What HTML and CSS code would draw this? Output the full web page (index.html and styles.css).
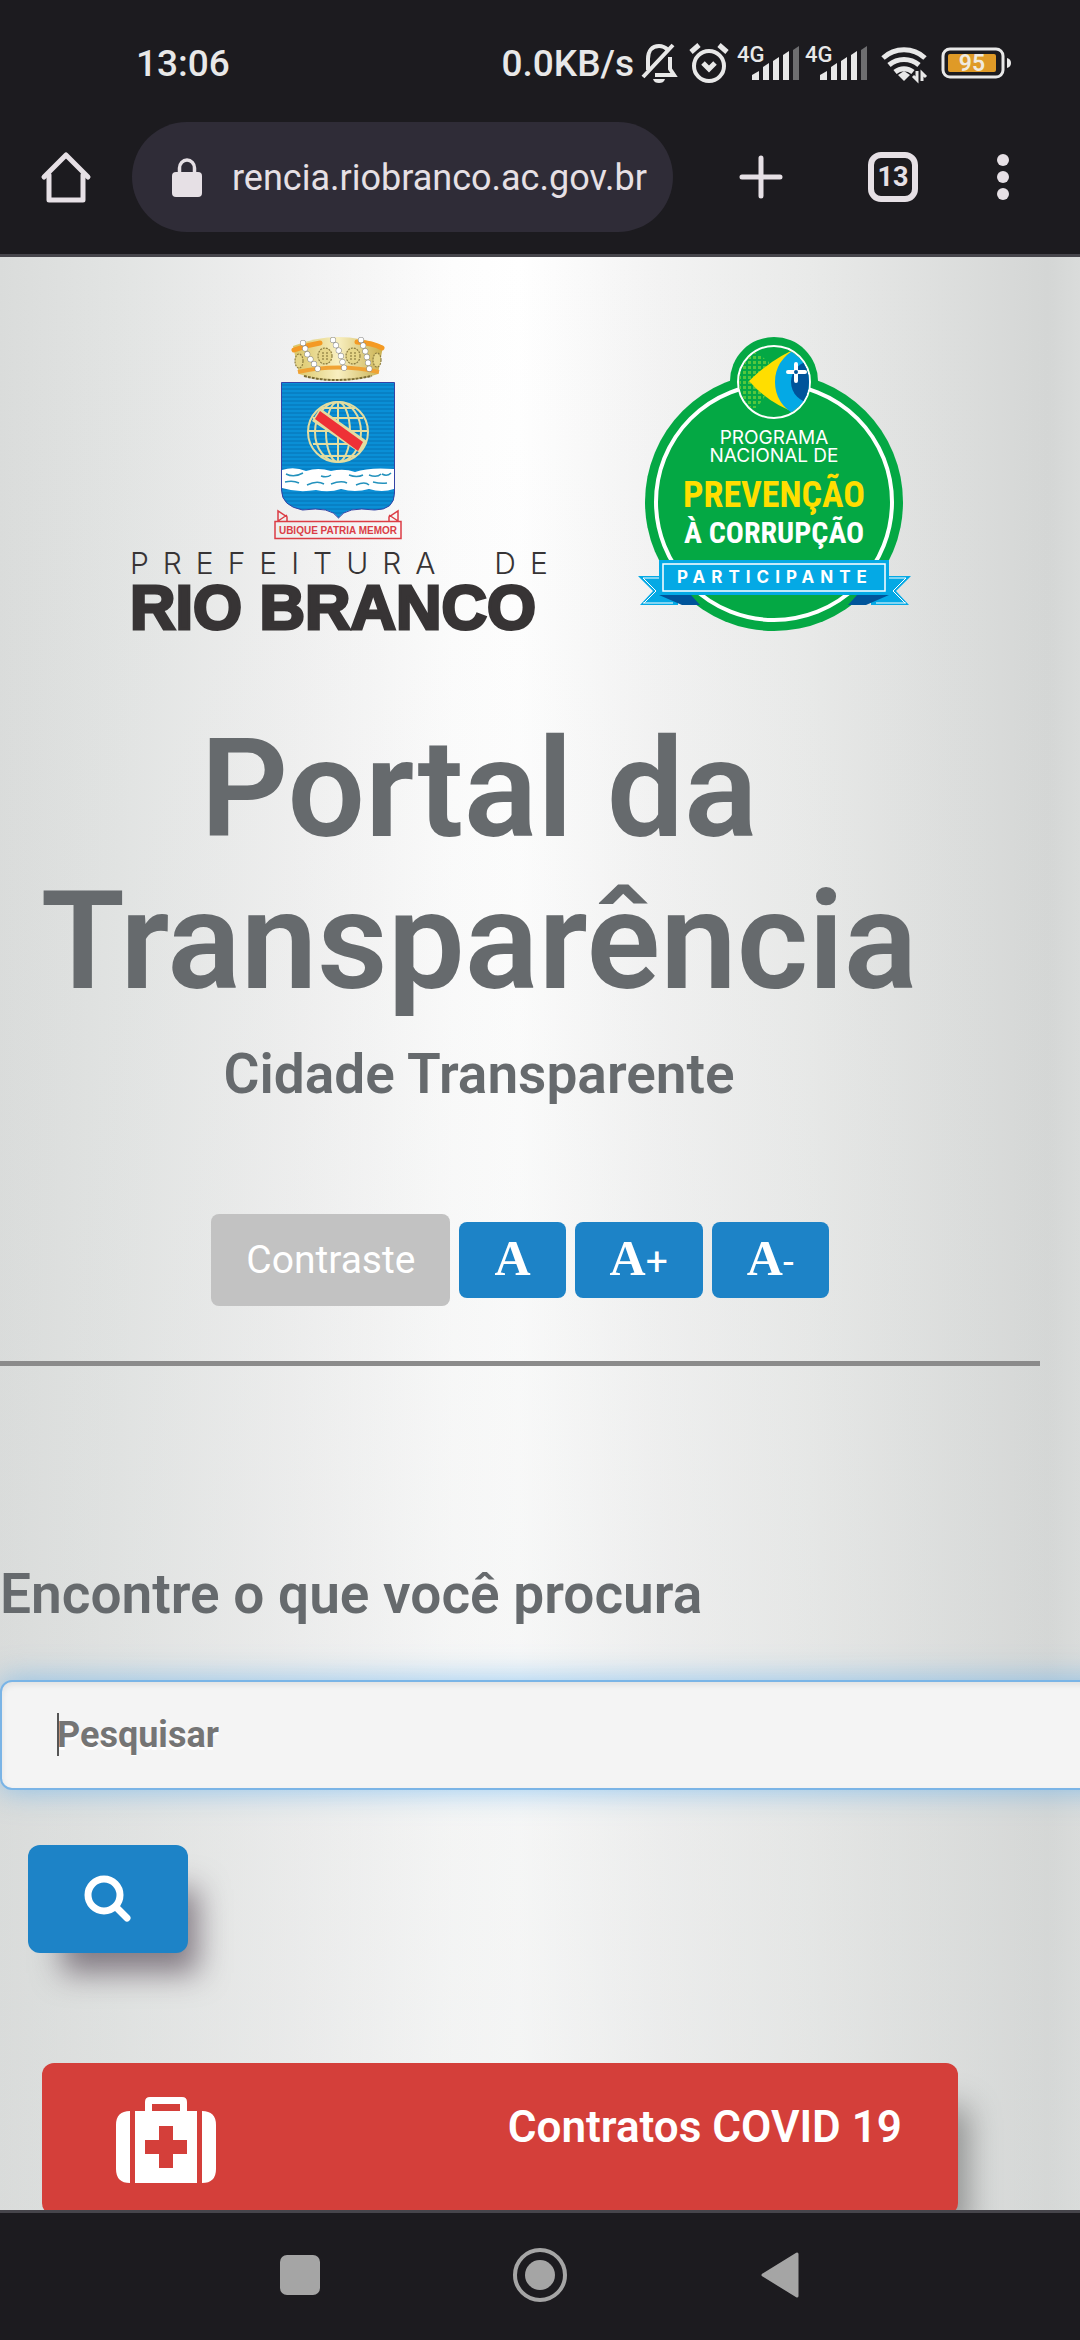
FILE: index.html
```html
<!DOCTYPE html>
<html lang="pt-BR">
<head>
<meta charset="utf-8">
<meta name="viewport" content="width=device-width, initial-scale=1">
<title>Portal da Transparência</title>
<link rel="stylesheet" href="styles.css">
</head>
<body>
<header class="chrome">
  <div class="status">
    <span class="clock">13:06</span>
    <div class="status-right">
      <span class="rate">0.0KB/s</span>
      <svg class="bell" width="36" height="42" viewBox="0 0 36 42" fill="none" stroke="#e8e8e8" stroke-width="4">
        <path d="M7 28V17C7 9 11 4 18 4c4 0 7 2 9 4M29 15v12l4 6H14M2 35L32 3"/>
        <path d="M12 37h12c-1 3-3 4-6 4s-5-1-6-4z" fill="#e8e8e8" stroke="none"/>
      </svg>
      <svg class="alarm" width="40" height="42" viewBox="0 0 40 42" fill="none" stroke="#e8e8e8" stroke-width="4">
        <circle cx="20" cy="24" r="15"/><path d="M14 21l6 6 6-6M2 10l8-7M30 3l8 7" stroke-width="5"/>
      </svg>
      <svg class="signal" width="64" height="44" viewBox="0 -4 64 44" fill="#e8e8e8">
        <text x="0" y="17" font-size="22" font-family="Roboto, sans-serif">4G</text>
        <path d="M15 35v-5l7-4v9zM26 35V22l6-4v17zM36 35V16l6-4v23zM46 35V10l6-4v29z"/><path d="M56 35V5l6-4v34z" fill="#6e6e70"/>
      </svg>
      <svg class="signal" width="64" height="44" viewBox="0 -4 64 44" fill="#e8e8e8">
        <text x="0" y="17" font-size="22" font-family="Roboto, sans-serif">4G</text>
        <path d="M15 35v-5l7-4v9zM26 35V22l6-4v17zM36 35V16l6-4v23zM46 35V10l6-4v29z"/><path d="M56 35V5l6-4v34z" fill="#6e6e70"/>
      </svg>
      <svg class="wifi" width="46" height="38" viewBox="0 0 46 38" fill="none" stroke="#e8e8e8" stroke-width="5">
        <path d="M2 14a31 31 0 0 1 42 0M8 21a23 23 0 0 1 30 0M14 28a14 14 0 0 1 18 0"/>
        <path d="M23 27l6 4-6 6-6-6z" fill="#e8e8e8" stroke="none"/>
        <path d="M36 27v9l-4-4M41 37v-8l4 4" stroke-width="3"/>
      </svg>
      <svg class="battery" width="70" height="32" viewBox="0 0 70 32">
        <rect x="2" y="2" width="60" height="28" rx="7" fill="none" stroke="#e8e8e8" stroke-width="3"/>
        <rect x="7" y="7" width="48" height="18" rx="2" fill="#df9a27"/>
        <path d="M66 11q4 1 4 5t-4 5z" fill="#e8e8e8"/>
        <text x="31" y="24" text-anchor="middle" font-size="23" font-weight="600" font-family="Roboto, sans-serif" fill="#f0eadf">95</text>
      </svg>
    </div>
  </div>
  <div class="toolbar">
    <button class="tool" aria-label="Página inicial">
      <svg width="52" height="52" viewBox="0 0 52 52" fill="none" stroke="#e6e0e5" stroke-width="5" stroke-linejoin="round" stroke-linecap="round"><path d="M4 26L26 4l22 22"/><path d="M9 24v25h34V24"/></svg>
    </button>
    <div class="address">
      <svg width="30" height="40" viewBox="0 0 30 40"><rect y="14" width="30" height="25" rx="4" fill="#e6e0e5"/><path d="M7.500 16v-6a7.500 8 0 0 1 15 0v6" fill="none" stroke="#e6e0e5" stroke-width="3.500"/></svg>
      <span class="url">rencia.riobranco.ac.gov.br</span>
    </div>
    <button class="tool plus" aria-label="Nova guia">
      <svg width="44" height="44" viewBox="0 0 44 44" stroke="#e6e0e5" stroke-width="5" stroke-linecap="round"><path d="M22 3v38M3 22h38"/></svg>
    </button>
    <button class="tool tabs" aria-label="Guias abertas">13</button>
    <button class="tool more" aria-label="Mais opções">
      <svg width="12" height="46" viewBox="0 0 12 46" fill="#e6e0e5"><circle cx="6" cy="6" r="6"/><circle cx="6" cy="23" r="6"/><circle cx="6" cy="40" r="6"/></svg>
    </button>
  </div>
</header>

<main class="page">
  <section class="hero">
    <div class="logos">
      <svg class="city" width="416" height="296" viewBox="129 337 416 296" role="img" aria-label="Prefeitura de Rio Branco">
        <defs>
          <linearGradient id="gold" x1="0" x2="1"><stop offset="0" stop-color="#d9c463"/><stop offset=".5" stop-color="#f8efc0"/><stop offset="1" stop-color="#c9b04e"/></linearGradient>
          <pattern id="lines" width="6" height="4" patternUnits="userSpaceOnUse"><rect width="6" height="4" fill="#0a8fd6"/><path d="M0 1h6" stroke="#0672b4" stroke-width="1"/></pattern>
        </defs>
        <path d="M292 346q46-18 90 0l-5 28q-40 14-79 0z" fill="url(#gold)"/>
        <path d="M293 350q13-5 26-7M356 342q16 1 25 6" stroke="#f49a24" stroke-width="5" fill="none" stroke-linecap="round"/>
        <path d="M297 372q40-9 81 0" stroke="#f0a234" stroke-width="4" fill="none"/>
        <path d="M303 376q30 8 68 0" stroke="#7a6b32" stroke-width="2" stroke-dasharray="3 1" fill="none"/>
        <g fill="#e6d688" stroke="#8d7d40" stroke-width="1.200" stroke-dasharray="2 1"><ellipse cx="298" cy="361" rx="4" ry="7"/><ellipse cx="324" cy="356" rx="7" ry="8"/><ellipse cx="352" cy="356" rx="7" ry="8"/><ellipse cx="376" cy="360" rx="4" ry="7"/><path d="M322 352v8m4-8v8m24-8v8m4-8v8"/></g>
        <g fill="none" stroke-linecap="round"><path d="M302 343l5 13 12 16M332 340l7 13 5 18M360 340l5 13 4 19" stroke="#888" stroke-width="6" stroke-dasharray="0 6"/><path d="M302 343l5 13 12 16M332 340l7 13 5 18M360 340l5 13 4 19" stroke="#fff" stroke-width="5" stroke-dasharray="0 6"/></g>
        <path d="M280.500 382.500h113V493q0 17-20 17-28-4-36 8-8-12-36-8-21-4-21-20z" fill="url(#lines)" stroke="#3443a5"/>
        <g fill="none" stroke="#e4dda0" stroke-width="2"><circle cx="337" cy="432" r="30"/><ellipse cx="337" cy="432" rx="12" ry="30"/><ellipse cx="337" cy="432" rx="23" ry="30"/><path d="M337 402v60M307 431h60M312 418h50M312 444h50M320 408h34M320 456h34"/></g>
        <path d="M319 408l47 33-7 12-48-32z" fill="#e4dda0"/><path d="M319 411l43 31-5 9-43-32z" fill="#ee3136"/>
        <path d="M281 470q12-4 24 1 12-4 25 0 13-3 24 1 14-5 39-3v20q-12 4-25 0-14 4-28 0-12 4-25 1-18 3-34-2z" fill="#fff"/>
        <path d="M285 474q8 4 17-1M284 482q8-2 14 1M306 485q10-5 17-1M320 476q6 2 10-1M330 484q10-4 16-1M348 475q8 3 14 0M355 485q9-4 13 0M368 475q8 3 12-1M372 482q8 2 14 1M381 474q5 3 9-1" stroke="#2492bd" stroke-width="1.500" fill="none"/>
        <g fill="none" stroke="#db3d45" stroke-width="1.500"><path d="M274 521.500h126v17H274zM277 521v-10l9 6v4M277 521l9-6M397 521v-10l-9 6v4M397 521l-9-6"/></g>
        <text x="337" y="534" text-anchor="middle" font-family="Liberation Sans, sans-serif" font-size="10" font-weight="700" fill="#db3d45">UBIQUE PATRIA MEMOR</text>
        <text class="tracked-city" x="129" y="574" font-family="Inter, sans-serif" font-size="30" font-weight="300" fill="#373435">PREFEITURA &#160;DE</text>
        <text x="129" y="629" font-family="Liberation Sans, sans-serif" font-size="63" font-weight="700" fill="#373435" stroke="#373435" stroke-width="3">RIO BRANCO</text>
      </svg>
      <svg class="badge" width="274" height="296" viewBox="635 337 274 296" role="img" aria-label="Programa Nacional de Prevenção à Corrupção - Participante">
        <defs>
          <clipPath id="globe"><circle cx="772" cy="382" r="35"/></clipPath>
          <pattern id="dots" width="5" height="5" patternUnits="userSpaceOnUse"><rect x="1" y="1" width="3" height="3" fill="#55c63d"/></pattern>
        </defs>
        <circle cx="772" cy="381" r="44" fill="#04a844"/><circle cx="772" cy="502" r="129" fill="#04a844"/>
        <circle cx="772" cy="502" r="118" fill="none" stroke="#fff" stroke-width="4"/>
        <circle cx="772" cy="382" r="36" fill="#04a844" stroke="#fff" stroke-width="2"/>
        <g clip-path="url(#globe)">
          <path d="M736 362l15-12 16 12v28l-12 18h-9l-10-22z" fill="url(#dots)"/>
          <path d="M747 381q26-25 50-33v66q-30-10-50-33z" fill="#ffde00"/>
          <path d="M795 348q-22 12-22 34t22 34l20-10v-52z" fill="#04a9e5"/>
          <circle cx="810" cy="382" r="21" fill="#00549a"/>
          <path d="M794 364v17M786 372h17" stroke="#fff" stroke-width="4" stroke-linecap="round"/><circle cx="794" cy="372" r="2" fill="#00549a"/>
        </g>
        <g text-anchor="middle" font-family="Inter, sans-serif" fill="#fff">
          <text x="772" y="444" font-size="19" font-weight="400">PROGRAMA</text>
          <text x="772" y="462" font-size="19" font-weight="400">NACIONAL DE</text>
        </g>
        <g text-anchor="middle" font-family="Roboto Condensed, Liberation Sans Narrow, Liberation Sans, sans-serif" font-weight="700">
          <text x="772" y="507" font-size="36" fill="#ffde00">PREVENÇÃO</text>
          <text x="772" y="543" font-size="30" fill="#fff">À CORRUPÇÃO</text>
        </g>
        <path d="M636 576h40v29h-38l13-14zM909 576h-40v29h38l-13-14z" fill="#04a9e5"/>
        <path d="M641 578h30M641 603h30M641 578l13 13-12 12M904 578h-30M904 603h-30M904 578l-13 13 12 12" stroke="#fff" fill="none"/>
        <path d="M657 595h32l9 10h-18zM887 595h-32l-9 10h18z" fill="#00549a"/>
        <rect x="657" y="560" width="230" height="35" fill="#04a9e5"/><rect x="661" y="564" width="222" height="27" fill="none" stroke="#fff" stroke-width="1.500"/>
        <text class="tracked-badge" x="675" y="583" font-family="Inter, sans-serif" font-size="17" font-weight="700" fill="#fff">PARTICIPANTE</text>
      </svg>
    </div>
    <h1 class="title">Portal da Transparência</h1>
    <h2 class="subtitle">Cidade Transparente</h2>
    <div class="access">
      <button class="contrast">Contraste</button>
      <button class="size"><b>A</b></button>
      <button class="size"><b>A</b>+</button>
      <button class="size"><b>A</b>-</button>
    </div>
  </section>
  <hr class="rule">
  <form class="search">
    <label class="search-label" for="q">Encontre o que você procura</label>
    <div class="field">
      <input id="q" class="search-input" type="text" placeholder="Pesquisar">
      <span class="caret"></span>
    </div>
    <button class="search-button" type="button" aria-label="Pesquisar">
      <svg width="48" height="48" viewBox="0 0 48 48" fill="none" stroke="#fff" stroke-width="7" stroke-linecap="round"><circle cx="20" cy="20" r="16"/><path d="M32 32l11 11"/></svg>
    </button>
  </form>
  <a class="card" href="#covid">
    <svg width="100" height="86" viewBox="0 0 100 86" fill="#fff"><path fill-rule="evenodd" d="M19 14h10V5q0-5 5-5h32q5 0 5 5v9h10v72H19zM36 14h28V7H36zM43 29v14H29v14h14v14h14V57h14V43H57V29z"/><path d="M14 14v72Q0 86 0 72V28q0-14 14-14zM86 14v72q14 0 14-14V28q0-14-14-14z"/></svg>
    <span class="card-title">Contratos COVID 19</span>
  </a>
</main>

<nav class="navbar">
  <button class="nav-button" aria-label="Recentes"><svg width="54" height="54" viewBox="0 0 54 54"><rect x="7" y="7" width="40" height="40" rx="7" fill="#a5a5a5"/></svg></button>
  <button class="nav-button" aria-label="Início"><svg width="54" height="54" viewBox="0 0 54 54"><circle cx="27" cy="27" r="25" fill="none" stroke="#a5a5a5" stroke-width="4"/><circle cx="27" cy="27" r="15" fill="#a5a5a5"/></svg></button>
  <button class="nav-button" aria-label="Voltar"><svg width="54" height="54" viewBox="0 0 54 54"><path d="M10 27L44 6v42z" fill="#a5a5a5" stroke="#a5a5a5" stroke-width="3" stroke-linejoin="round"/></svg></button>
</nav>
</body>
</html>
```
FILE: styles.css
```css
* { box-sizing: border-box; }
body {
  margin: 0;
  height: 100vh;
  display: flex;
  flex-direction: column;
  font-family: Roboto, sans-serif;
  color: #666a6d;
  background: #1c1b1f;
  overflow: hidden;
}
button { border: 0; padding: 0; margin: 0; font-family: inherit; color: inherit; background: none; }
svg { display: block; flex: none; overflow: visible; }

.chrome { flex: none; border-bottom: 3px solid #46454b; }
.status {
  display: flex;
  justify-content: space-between;
  align-items: center;
  height: 122px;
  padding: 4px 69px 0 136px;
  color: #e8e8e8;
  font-size: 37px;
  font-weight: 500;
}
.status-right { display: flex; align-items: center; }
.bell { margin-left: 7px; }
.alarm { margin: 0 8px 0 12px; }
.signal { margin-right: 4px; }
.wifi { margin: 0 14px 0 8px; }

.toolbar {
  display: flex;
  align-items: center;
  height: 132px;
  padding: 0 71px 22px 40px;
  color: #e6e0e5;
}
.tool { flex: none; display: flex; align-items: center; justify-content: center; }
.address {
  flex: 1;
  display: flex;
  align-items: center;
  gap: 30px;
  height: 110px;
  margin: 0 66px 0 40px;
  padding: 2px 0 0 40px;
  border-radius: 55px;
  background: #2f2c37;
}
.url { font-size: 36px; white-space: nowrap; }
.tabs {
  width: 50px;
  height: 50px;
  margin: 0 79px 0 85px;
  border: 6px solid #e6e0e5;
  border-radius: 13px;
  font-size: 27px;
  font-weight: 700;
}

.page {
  flex: 1;
  min-height: 0;
  overflow: hidden;
  background:
    linear-gradient(to bottom, rgba(215, 218, 217, 0), rgba(215, 218, 217, 0.300)),
    linear-gradient(to right, #dadcdb 0, #e2e4e3 11%, #f1f1f1 28%, #fdfdfd 42%, #ffffff 48%, #f3f3f3 61%, #e9eae9 75%, #d4d6d5 97%, #dadcdb 100%);
}
.hero {
  display: flex;
  flex-direction: column;
  align-items: center;
  padding: 80px 122px 55px 0;
}
.logos { display: flex; gap: 91px; padding-left: 82px; }
.tracked-city { letter-spacing: 14px; }
.tracked-badge { letter-spacing: 6px; }
.title { margin: 80px 0 0; font-size: 137px; line-height: 152px; font-weight: 600; text-align: center; }
.subtitle { margin: 25px 0 0; font-size: 55px; line-height: 64px; font-weight: 600; }
.access { display: flex; align-items: center; gap: 9px; margin-top: 108px; padding-left: 82px; color: #fff; }
.contrast { height: 92px; padding: 0 35px; border-radius: 8px; font-size: 39px; background: #c2c2c2; }
.size { height: 76px; padding: 0 35px; border-radius: 8px; font-size: 39px; line-height: 56px; background: #1d83c7; }
.size b { font-family: "Liberation Serif", serif; font-size: 50px; }
.rule { margin: 0 40px 0 0; border: 0; height: 5px; background: #8b8b8b; }

.search { padding-top: 196px; }
.search-label { display: block; font-size: 55px; line-height: 64px; font-weight: 600; }
.field { position: relative; margin: 54px -60px 55px 0; }
.search-input {
  display: block;
  width: 100%;
  height: 110px;
  padding: 0 55px;
  border: 2px solid #7ab4e6;
  border-radius: 12px;
  background: #f4f4f4;
  box-shadow: 0 0 30px rgba(82, 168, 236, 0.600), inset 0 3px 6px rgba(0, 0, 0, 0.080);
  font: 700 36px Roboto, sans-serif;
  text-shadow: 0 3px 0 #fff;
}
.search-input::placeholder { color: #757575; opacity: 1; }
.caret { position: absolute; left: 57px; top: 33px; width: 2px; height: 43px; background: #555; }
.search-button {
  display: flex;
  align-items: center;
  justify-content: center;
  width: 160px;
  height: 108px;
  margin-left: 28px;
  border-radius: 12px;
  background: #1d83c7;
  box-shadow: 22px 32px 30px -12px rgba(70, 55, 70, 0.600);
}
.card {
  display: flex;
  justify-content: space-between;
  height: 152px;
  margin: 110px 122px 0 42px;
  padding: 34px 56px 0 74px;
  border-radius: 12px;
  background: #d43f3a;
  box-shadow: 22px 32px 30px -12px rgba(0, 0, 0, 0.350);
  color: #fff;
  text-decoration: none;
}
.card-title { font-size: 44px; line-height: 60px; font-weight: 600; }

.navbar {
  flex: none;
  display: flex;
  justify-content: center;
  gap: 186px;
  height: 130px;
  padding-top: 35px;
  border-top: 3px solid #46454b;
}
.nav-button { height: 54px; }
```
